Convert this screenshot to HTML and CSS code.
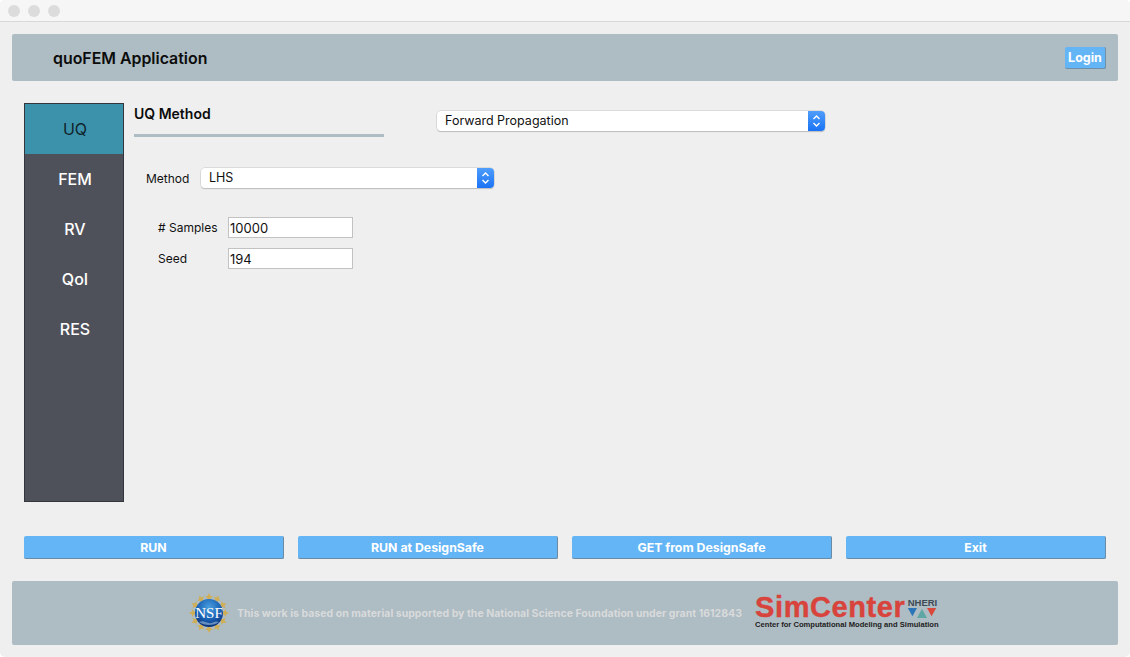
FILE: index.html
```html
<!DOCTYPE html>
<html lang="en">
<head>
  <meta charset="UTF-8">
  <title>quoFEM Application</title>
  <link rel="stylesheet" href="styles.css">
</head>
<body>
  <div class="titlebar">
    <span class="light"></span>
    <span class="light"></span>
    <span class="light"></span>
  </div>

  <header class="app-header">
    <h1>quoFEM Application</h1>
    <button class="login">Login</button>
  </header>

  <main class="main">
    <nav class="sidebar">
      <div class="nav-item active">UQ</div>
      <div class="nav-item">FEM</div>
      <div class="nav-item">RV</div>
      <div class="nav-item">QoI</div>
      <div class="nav-item">RES</div>
    </nav>

    <section class="panel">
      <div class="panel-top">
        <div class="panel-title">
          <h2>UQ Method</h2>
          <div class="rule"></div>
        </div>
        <div class="combo combo-engine">
          <span class="combo-text">Forward Propagation</span>
          <span class="stepper">
            <svg width="9" height="14" viewBox="0 0 9 14"><path d="M1.5 5 4.5 2 7.500 5M1.500 9 4.500 12 7.500 9" fill="none" stroke="#fff" stroke-width="1.400"/></svg>
          </span>
        </div>
      </div>

      <div class="method-row">
        <label>Method</label>
        <div class="combo combo-method">
          <span class="combo-text">LHS</span>
          <span class="stepper">
            <svg width="9" height="14" viewBox="0 0 9 14"><path d="M1.5 5 4.5 2 7.500 5M1.500 9 4.500 12 7.500 9" fill="none" stroke="#fff" stroke-width="1.400"/></svg>
          </span>
        </div>
      </div>

      <div class="field-row first">
        <label># Samples</label>
        <input type="text" value="10000">
      </div>
      <div class="field-row">
        <label>Seed</label>
        <input type="text" value="194">
      </div>
    </section>
  </main>

  <div class="actions">
    <button class="action">RUN</button>
    <button class="action">RUN at DesignSafe</button>
    <button class="action">GET from DesignSafe</button>
    <button class="action">Exit</button>
  </div>

  <footer class="app-footer">
    <svg class="nsf" width="40" height="40" viewBox="0 0 40 40">
      <defs>
        <radialGradient id="globe" cx="50%" cy="30%" r="70%">
          <stop offset="0" stop-color="#4a9fe0"/>
          <stop offset="0.6" stop-color="#1a62b4"/>
          <stop offset="1" stop-color="#0c2f78"/>
        </radialGradient>
        <path id="ray" d="M20 0 21.500 3H24L21.800 5 20 8 18.200 5 16 3H18.500Z" fill="#d0ae55"/>
      </defs>
      <use href="#ray"/>
      <use href="#ray" transform="rotate(30 20 20)"/>
      <use href="#ray" transform="rotate(60 20 20)"/>
      <use href="#ray" transform="rotate(90 20 20)"/>
      <use href="#ray" transform="rotate(120 20 20)"/>
      <use href="#ray" transform="rotate(150 20 20)"/>
      <use href="#ray" transform="rotate(180 20 20)"/>
      <use href="#ray" transform="rotate(210 20 20)"/>
      <use href="#ray" transform="rotate(240 20 20)"/>
      <use href="#ray" transform="rotate(270 20 20)"/>
      <use href="#ray" transform="rotate(300 20 20)"/>
      <use href="#ray" transform="rotate(330 20 20)"/>
      <circle cx="20" cy="20" r="14" fill="url(#globe)"/>
      <path d="M10 29C15 33 25 33 30 29 26 27 23 31 20 30 16 29 14 27 10 29Z" fill="#9fc0dc" opacity="0.6"/>
      <text x="20" y="25" text-anchor="middle" class="nsf-text">NSF</text>
    </svg>
    <span class="grant">This work is based on material supported by the National Science Foundation under grant 1612843</span>
    <div class="simcenter">
      <div class="simcenter-top">
        <span class="simcenter-name">SimCenter</span>
        <div class="nheri">
          <span class="nheri-text">NHERI</span>
          <svg width="30" height="10" viewBox="0 0 34 12">
            <path d="M0 0H11L5.500 10Z" fill="#2b74b8"/>
            <path d="M17 1 23 12H11Z" fill="#5fa7a5"/>
            <path d="M23 0H34L28.500 10Z" fill="#d9483b"/>
          </svg>
        </div>
      </div>
      <div class="simcenter-sub">Center for Computational Modeling and Simulation</div>
    </div>
  </footer>
</body>
</html>
```

FILE: styles.css
```css
html { height: 100%; background-color: #fff; }
body {
  height: 100%;
  margin: 0;
  background-color: #efefef;
  border-radius: 5px;
  font-family: Inter, "Liberation Sans", sans-serif;
  color: #111;
  overflow: hidden;
}

.titlebar {
  height: 21px;
  display: flex;
  align-items: center;
  gap: 8px;
  padding-left: 8px;
  background-color: #f6f6f6;
  border-bottom: 1px solid #d8d8d8;
}
.light { width: 12px; height: 12px; border-radius: 50%; background-color: #dcdcdc; }

.app-header {
  margin: 12px 12px 0;
  height: 47px;
  display: flex;
  align-items: center;
  justify-content: space-between;
  padding: 0 12px 0 41px;
  background-color: #aebcc3;
  border-radius: 2px;
}
.app-header h1 { margin: 1px 0 0; font-size: 15.900px; font-weight: 600; color: #0c0c0c; }
.login {
  width: 41px;
  height: 22px;
  padding: 0;
  background-color: #64b5f6;
  color: #fff;
  border: none;
  border-radius: 2px;
  border-right: 1px solid #6d90a8;
  border-bottom: 1px solid #6d90a8;
  font-family: inherit;
  font-size: 12.500px;
  font-weight: 700;
}

.main { display: flex; margin: 22px 0 0 24px; height: 399px; }
.sidebar {
  width: 98px;
  background-color: #4f515a;
  border: 1px solid #33363d;
}
.nav-item {
  height: 50px;
  display: flex;
  align-items: center;
  justify-content: center;
  padding-left: 2px;
  color: #fff;
  font-size: 16px;
  font-weight: 500;
}
.nav-item.active { background-color: #3c92ab; color: #10232b; font-weight: 400; }

.panel { margin-left: 10px; flex: 1; }
.panel-top { display: flex; }
.panel-title { width: 250px; }
.panel-title h2 { margin: 2px 0 0; font-size: 14px; line-height: 18px; font-weight: 600; color: #0c0c0c; }
.rule { height: 3px; margin-top: 11px; background-color: #aebcc3; }

.combo {
  display: flex;
  align-items: center;
  justify-content: space-between;
  height: 20px;
  box-sizing: border-box;
  background-color: #fff;
  border-radius: 4px;
  box-shadow: 0 0 0 0.500px #c8c8c8, 0 1px 1px #b4b4b4;
  font-size: 12.500px;
  color: #111;
}
.combo-text { padding: 0 0 1px 8px; }
.stepper {
  width: 17px;
  height: 20px;
  display: flex;
  align-items: center;
  justify-content: center;
  border-radius: 0 4px 4px 0;
  background: linear-gradient(#4f9dfb, #1a73f5);
}
.combo-engine { width: 388px; margin: 8px 0 0 53px; }
.combo-method { width: 293px; }

.method-row { display: flex; align-items: center; margin: 31px 0 0 12px; }
.method-row label { width: 55px; font-size: 12px; }

.field-row { display: flex; align-items: center; margin: 10px 0 0 24px; }
.field-row.first { margin-top: 29px; }
.field-row label { width: 70px; font-size: 12px; }
.field-row input {
  width: 125px;
  height: 21px;
  box-sizing: border-box;
  padding: 1px 1px 0;
  border: 1px solid #c2c2c2;
  background-color: #fff;
  font-family: inherit;
  font-size: 13px;
  color: #111;
  outline: none;
}

.actions { display: flex; gap: 14px; margin: 34px 0 0 24px; }
.action {
  width: 260px;
  height: 23px;
  padding: 0;
  background-color: #64b5f6;
  color: #fff;
  border: none;
  border-radius: 2px;
  border-right: 1px solid #6a8ba3;
  border-bottom: 1px solid #6a8ba3;
  font-family: inherit;
  font-size: 12.300px;
  font-weight: 700;
}

.app-footer {
  margin: 22px 12px 0;
  height: 64px;
  display: flex;
  align-items: center;
  padding-left: 177px;
  background-color: #aebcc3;
  border-radius: 2px;
}
.nsf { flex: none; }
.nsf-text { font-family: "Liberation Serif", serif; font-size: 15px; fill: #fff; }
.grant { margin-left: 8px; font-size: 10.560px; font-weight: 700; color: #d8dadb; white-space: nowrap; }

.simcenter { margin-left: 13px; width: 190px; padding-bottom: 2px; }
.simcenter-top { display: flex; align-items: flex-start; height: 25px; }
.simcenter-name {
  font-family: "Liberation Sans", sans-serif;
  font-size: 29px;
  line-height: 25px;
  font-weight: 700;
  letter-spacing: 0.600px;
  color: #d8433c;
  -webkit-text-stroke: 0.400px #d8433c;
}
.nheri { display: flex; flex-direction: column; align-items: center; margin: 2px 0 0 2px; width: 30px; }
.nheri-text { font-family: "Liberation Sans", sans-serif; font-size: 9.500px; line-height: 11px; font-weight: 700; color: #3e4a55; white-space: nowrap; }
.simcenter-sub { font-family: "Liberation Sans", sans-serif; font-size: 7.600px; line-height: 9px; font-weight: 700; color: #222; white-space: nowrap; }
```
